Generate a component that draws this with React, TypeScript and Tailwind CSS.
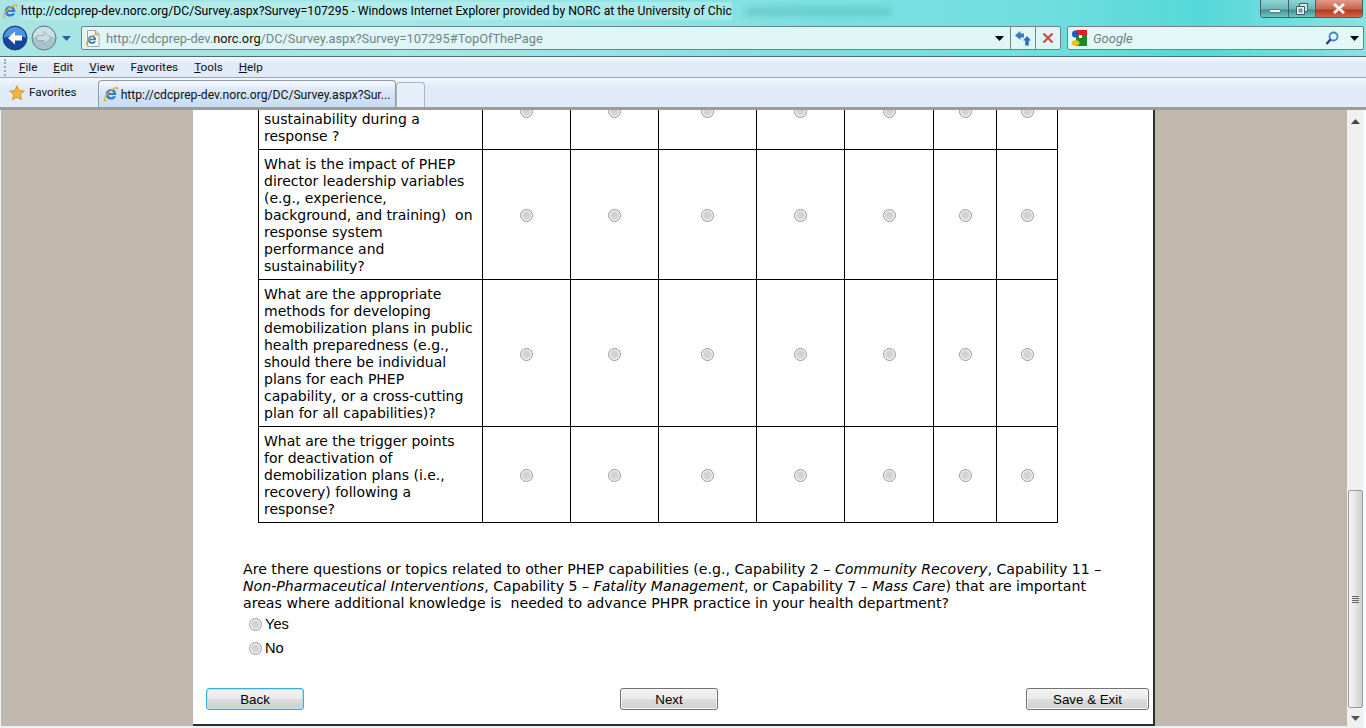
const rows = [
  {
    h: "h-[79px]",
    lines: "sustainability during a\nresponse ?",
    bottom: true,
  },
  {
    h: "h-[130px]",
    lines:
      "What is the impact of PHEP\ndirector leadership variables\n(e.g., experience,\nbackground, and training)\u00a0 on\nresponse system\nperformance and\nsustainability?",
  },
  {
    h: "h-[147px]",
    lines:
      "What are the appropriate\nmethods for developing\ndemobilization plans in public\nhealth preparedness (e.g.,\nshould there be individual\nplans for each PHEP\ncapability, or a cross-cutting\nplan for all capabilities)?",
  },
  {
    h: "h-[96px]",
    lines:
      "What are the trigger points\nfor deactivation of\ndemobilization plans (i.e.,\nrecovery) following a\nresponse?",
  },
];

const answerCols = ["w-[88px]", "w-[88px]", "w-[98px]", "w-[88px]", "w-[89px]", "w-[63px]", "w-[61px]"];

function Radio({ className = "" }: { className?: string }) {
  return (
    <span
      className={`h-[13px] w-[13px] rounded-full border border-[#9a9b9b] bg-[radial-gradient(circle_at_50%_45%,#cfcfcf_0%,#d6d6d6_45%,#f2f2f2_90%)] shadow-[inset_0_0_0_1px_#f4f4f4] ${className}`}
    />
  );
}

function IeIcon({ size = 16 }: { size?: number }) {
  return (
    <svg width={size} height={size} viewBox="0 0 16 16">
      <path
        d="M8.2 3C5.4 3 3 5.2 2.8 8.2 2.6 11.2 4.8 13.6 8 13.6c2.4 0 4.2-1.3 5-3.4h-3c-.4.7-1.1 1.1-2 1.1-1.3 0-2.3-.9-2.4-2.2h7.7c.3-3.4-1.9-6.1-5.1-6.1zM5.7 7.100C5.900 6 6.900 5.200 8.100 5.200S10.300 6 10.500 7.100z"
        fill="#2f7fd0"
      />
      <path
        d="M1 15C.2 13.600 1.800 9.400 5.600 5.700 9.600 1.800 13.400.2 14.700 1.200c1 .8.4 2.800-.6 4.400.2-1.300.3-2.700-.5-3.100C12.500 2 9.600 3.800 6.500 6.700 3.400 9.700 1.300 12.800 2.200 14c.5.600 1.700.4 3-.2C3.500 15.200 1.700 15.800 1 15z"
        fill="#f0a81c"
      />
    </svg>
  );
}

function BackIcon() {
  return (
    <svg width="26" height="26" viewBox="0 0 26 26">
      <circle cx="13" cy="13" r="12" fill="#11479f" stroke="#28436e" />
      <path d="M2 13a11 11 0 0 1 22 0c-5-3-17-3-22 0z" fill="#4f93e4" />
      <path d="M13 6.500 6 13l7 6.500v-4h7v-5h-7z" fill="#fff" />
    </svg>
  );
}

function ForwardIcon() {
  return (
    <svg width="26" height="26" viewBox="0 0 26 26">
      <circle cx="13" cy="13" r="12" fill="#a9c2cc" stroke="#5d7a88" />
      <path d="M2 13a11 11 0 0 1 22 0c-5-3-17-3-22 0z" fill="#cfe0e4" />
      <path d="M13 6.500 20 13l-7 6.500v-4H6v-5h7z" fill="#cddadf" stroke="#8ea9b5" strokeWidth=".8" />
    </svg>
  );
}

function Caret({ color = "#000", className = "" }: { color?: string; className?: string }) {
  return (
    <svg width="9" height="5" viewBox="0 0 9 5" className={className}>
      <path d="M0 0h9L4.500 5z" fill={color} />
    </svg>
  );
}

function PageIcon() {
  return (
    <svg width="16" height="17" viewBox="0 0 16 17">
      <path d="M2.500.5h8l3.500 3.500v12.500H2.500z" fill="#fbfcfd" stroke="#9aa5ae" />
      <path d="M10.500.5V4H14" fill="#dde4ea" stroke="#9aa5ae" />
      <g transform="translate(0.500 3) scale(.8)">
        <path
          d="M8.200 3C5.400 3 3 5.200 2.800 8.200 2.600 11.200 4.800 13.600 8 13.600c2.400 0 4.200-1.300 5-3.400h-3c-.4.700-1.100 1.100-2 1.100-1.300 0-2.300-.9-2.400-2.200h7.700c.3-3.400-1.900-6.100-5.100-6.100zM5.700 7.100C5.900 6 6.900 5.200 8.100 5.200S10.300 6 10.500 7.100z"
          fill="#2f7fd0"
        />
        <path
          d="M1 15C.2 13.600 1.800 9.400 5.600 5.700 9.600 1.800 13.400.2 14.700 1.200c1 .8.4 2.800-.6 4.400.2-1.300.3-2.700-.5-3.100C12.500 2 9.600 3.800 6.500 6.700 3.400 9.700 1.300 12.800 2.200 14c.5.600 1.700.4 3-.2C3.500 15.200 1.700 15.800 1 15z"
          fill="#f0a81c"
        />
      </g>
    </svg>
  );
}

function RefreshIcon() {
  return (
    <svg width="18" height="15" viewBox="0 0 18 15">
      <path d="M1 4.500 6.500 0v2.500h3.500v4H6.500V9z" fill="#3b76bf" />
      <path d="M17 9.500 13 5 9 9.500h2.200V14.500h3.600V9.500z" fill="#2f6db8" />
    </svg>
  );
}

function StopIcon() {
  return (
    <svg width="12" height="12" viewBox="0 0 12 12">
      <path d="M1.500 1.500 10.500 10.500M10.500 1.500 1.500 10.500" stroke="#c8504c" strokeWidth="2.400" />
    </svg>
  );
}

function GoogleIcon() {
  return (
    <svg width="16" height="16" viewBox="0 0 16 16">
      <rect x="5" y="0" width="11" height="8" fill="#e81c1c" />
      <rect x="5" y="5" width="11" height="11" fill="#1b8a2a" />
      <rect x="8" y="5" width="3" height="3" fill="#fff" />
      <ellipse cx="4" cy="4" rx="3" ry="3.500" fill="#1d58c4" />
      <ellipse cx="4.500" cy="13" rx="4" ry="2.800" fill="#f6bd1c" />
    </svg>
  );
}

function SearchIcon() {
  return (
    <svg width="14" height="15" viewBox="0 0 14 15">
      <circle cx="8.500" cy="5.500" r="4" fill="#eef8fb" stroke="#3c82cf" strokeWidth="1.800" />
      <path d="M5.500 8.500 1.500 13" stroke="#1e3f8f" strokeWidth="2.400" />
    </svg>
  );
}

function StarIcon() {
  return (
    <svg width="16" height="16" viewBox="0 0 16 16">
      <path
        d="M8 .8l2.200 4.700 5.100.6-3.800 3.500 1 5.100L8 12.200l-4.500 2.500 1-5.100L.7 6.100l5.100-.6z"
        fill="#f5b63b"
        stroke="#c98a1c"
        strokeWidth=".8"
      />
    </svg>
  );
}

function ActionButton({ label, className, focused }: { label: string; className: string; focused?: boolean }) {
  return (
    <button
      className={`${className} h-[22px] rounded-[3px] border bg-[linear-gradient(#f2f2f2_0%,#ebebeb_48%,#dddddd_52%,#cfcfcf_100%)] font-['Liberation_Sans',sans-serif] text-[13.33px] leading-[19px] text-black ${
        focused
          ? "border-[#3bacd8] shadow-[inset_0_0_0_1px_#b6e4f5]"
          : "border-[#707070] shadow-[inset_0_0_0_1px_#f7f7f7]"
      }`}
    >
      {label}
    </button>
  );
}

export default function App() {
  return (
    <div className="flex h-[728px] w-[1366px] flex-col overflow-hidden bg-[#c0b8ad] font-['DejaVu_Sans',sans-serif] text-black">
      {/* Window chrome */}
      <div className="relative h-[57px] shrink-0 border-b border-[#4d6a6c] bg-[linear-gradient(90deg,#a8e4e4_0%,#a5e6e6_30%,#92e4e4_46%,#7be0e0_60%,#72dfdf_75%,#56d8d8_88%,#86e3e3_100%)] font-['Roboto',sans-serif]">
        <div className="absolute left-[745px] top-[7px] h-[9px] w-[145px] bg-[#3f9a9c]/30 blur-[3px]" />

        {/* Title row */}
        <div className="flex h-[26px] items-start">
          <div className="ml-[2px] mt-[3px]">
            <IeIcon />
          </div>
          <span className="ml-[3px] mt-[2px] whitespace-nowrap bg-[#bdeeee]/60 text-[12.2px] leading-[18px]">
            http://cdcprep-dev.norc.org/DC/Survey.aspx?Survey=107295 - Windows Internet Explorer provided by NORC at the University of Chic
          </span>
          <div className="ml-auto mr-[3px] flex h-[18px] overflow-hidden rounded-b-[4px] border border-t-0 border-[#3f6467]">
            <div className="flex w-[28px] items-center justify-center border-r border-[#3f6467] bg-[linear-gradient(#8dd6d6_0%,#6fb9ba_50%,#3f9394_60%,#76c4c4_100%)]">
              <span className="mt-[4px] h-[4px] w-[12px] rounded-[1px] border border-[#5e7c7e] bg-white" />
            </div>
            <div className="flex w-[27px] items-center justify-center border-r border-[#3f6467] bg-[linear-gradient(#8dd6d6_0%,#6fb9ba_50%,#3f9394_60%,#76c4c4_100%)]">
              <svg width="12" height="12" viewBox="0 0 12 12">
                <path d="M3.500 .5h8v8h-8z" fill="#cfe8e8" stroke="#3f5f62" />
                <path d="M.5 3.500h8v8h-8z" fill="#e6f3f3" stroke="#3f5f62" />
                <path d="M3 6h3v3H3z" fill="#7fb5b7" stroke="#3f5f62" strokeWidth=".6" />
              </svg>
            </div>
            <div className="flex w-[46px] items-center justify-center bg-[linear-gradient(#e09a88_0%,#c9664f_50%,#b53a22_62%,#d4654a_100%)]">
              <svg width="14" height="11" viewBox="0 0 14 11">
                <path d="M2 1l10 9M12 1 2 10" stroke="#f4f0ee" strokeWidth="3" />
              </svg>
            </div>
          </div>
        </div>

        {/* Address row */}
        <div className="flex h-[24px] items-center">
          <div className="ml-[2px] mt-[-1px]">
            <BackIcon />
          </div>
          <div className="ml-[3px] mt-[-1px]">
            <ForwardIcon />
          </div>
          <Caret color="#2e5f9d" className="ml-[5px]" />
          <div className="ml-[10px] flex h-[24px] w-[980px] items-center rounded-[2px] border border-[#6d8486] bg-[#e0f6f6]">
            <div className="ml-[3px]">
              <PageIcon />
            </div>
            <span className="ml-[5px] mt-[2px] whitespace-nowrap text-[12.8px] text-[#6f8587]">
              http://cdcprep-dev.<span className="text-[#111]">norc.org</span>/DC/Survey.aspx?Survey=107295#TopOfThePage
            </span>
            <Caret className="ml-auto mr-[6px]" />
            <div className="flex h-full w-[25px] items-center justify-center border-l border-[#6d8486]">
              <RefreshIcon />
            </div>
            <div className="flex h-full w-[25px] items-center justify-center border-l border-[#6d8486]">
              <StopIcon />
            </div>
          </div>
          <div className="ml-[6px] flex h-[24px] w-[297px] items-center rounded-[2px] border border-[#6d8486] bg-[#e3f7f7]">
            <div className="ml-[3px]">
              <GoogleIcon />
            </div>
            <span className="ml-[6px] mt-[2px] text-[13px] italic text-[#707f80]">Google</span>
            <div className="ml-auto">
              <SearchIcon />
            </div>
            <Caret className="ml-[11px] mr-[4px]" />
          </div>
        </div>
      </div>

      {/* Menu bar */}
      <div className="flex h-[21px] shrink-0 items-center border-b border-[#9ba6ae] bg-[linear-gradient(#f2f7fd_0%,#e0ebf7_35%,#e0ebf7_100%)] font-['Roboto',sans-serif] text-[11.7px] text-[#111]">
        <div className="ml-[4px] h-[17px] w-[2px] border-l-2 border-dotted border-[#9aa5ae]" />
        <div className="ml-[13px] mt-[2px] flex gap-[16px]">
          <span><span className="underline">F</span>ile</span>
          <span><span className="underline">E</span>dit</span>
          <span><span className="underline">V</span>iew</span>
          <span>F<span className="underline">a</span>vorites</span>
          <span><span className="underline">T</span>ools</span>
          <span><span className="underline">H</span>elp</span>
        </div>
      </div>

      {/* Favorites and tabs */}
      <div className="flex h-[32px] shrink-0 border-b-[3px] border-[#9c9c9c] bg-[linear-gradient(#f2f7fd_0%,#e0ebf7_35%,#e0ebf7_100%)] font-['Roboto',sans-serif] text-[11.7px] text-[#111]">
        <div className="ml-[9px] flex items-center self-start pt-[6px]">
          <StarIcon />
          <span className="ml-[4px]">Favorites</span>
        </div>
        <div className="ml-[21px] mt-[2px] flex h-[27px] w-[298px] items-center rounded-t-[4px] border border-b-0 border-[#8f9ba5] bg-[linear-gradient(#f4f8fd_0%,#d5e5f7_45%,#c9ddf5_100%)]">
          <div className="ml-[4px]">
            <IeIcon />
          </div>
          <span className="ml-[2px] mt-[2px] whitespace-nowrap text-[12.17px]">http://cdcprep-dev.norc.org/DC/Survey.aspx?Sur...</span>
        </div>
        <div className="mt-[4px] h-[25px] w-[29px] rounded-t-[4px] border border-b-0 border-[#a9b4bd] bg-[#e6eff9]" />
      </div>

      {/* Page viewport */}
      <div className="flex min-h-0 flex-1">
        <div className="min-h-0 flex-1 overflow-hidden border-b-2 border-l border-[#eaf3f4]">
          <div className="ml-[192px] flow-root h-[616px] w-[962px] border-r-2 border-b-2 border-[#2e2e2e] bg-white">
            <div className="ml-[65px] mt-[-40px] w-[800px]">
              <table className="w-[800px] table-fixed border-collapse border border-black text-[14px] leading-[17px]">
                <colgroup>
                  <col className="w-[224px]" />
                  {answerCols.map((w, i) => (
                    <col key={i} className={w} />
                  ))}
                </colgroup>
                <tbody>
                  {rows.map((row) => (
                    <tr key={row.lines} className={row.h}>
                      <td
                        className={`whitespace-pre-line border border-black pl-[5px] ${
                          row.bottom ? "py-[4px] align-bottom" : "pt-[5px] pb-[3px] align-middle"
                        }`}
                      >
                        {row.lines}
                      </td>
                      {answerCols.map((w, i) => (
                        <td key={i} className="border border-black pt-[2px] align-middle">
                          <Radio className="mx-auto block" />
                        </td>
                      ))}
                    </tr>
                  ))}
                </tbody>
              </table>
            </div>

            <p className="ml-[50px] mt-[38px] w-[870px] text-[14.15px] leading-[17px]">
              Are there questions or topics related to other PHEP capabilities (e.g., Capability 2 – <i>Community Recovery</i>, Capability 11 – <i>Non-Pharmaceutical Interventions</i>, Capability 5 – <i>Fatality Management</i>, or Capability 7 – <i>Mass Care</i>) that are important areas where additional knowledge is&nbsp; needed to advance PHPR practice in your health department?
            </p>

            <div className="ml-[56px] mt-[4px] flex flex-col gap-[7px] font-['Liberation_Sans',sans-serif] text-[14.670px] leading-[17px]">
              <label className="flex items-center gap-[3px]">
                <Radio /> Yes
              </label>
              <label className="flex items-center gap-[3px]">
                <Radio /> No
              </label>
            </div>

            <div className="ml-[13px] mt-[31px] flex">
              <ActionButton label="Back" className="w-[98px]" focused />
              <ActionButton label="Next" className="ml-[316px] w-[98px]" />
              <ActionButton label="Save & Exit" className="ml-[308px] w-[123px]" />
            </div>
          </div>
        </div>

        {/* Scrollbar */}
        <div className="flex w-[19px] shrink-0 bg-[#f7fbfb]">
          <div className="flex w-[16px] flex-col items-center bg-[#f0f0f0]">
            <Caret color="#444" className="mt-[9px] rotate-180" />
            <div className="mt-[366px] flex h-[218px] w-[15px] items-center justify-center rounded-[2px] border border-[#9a9a9a] bg-[linear-gradient(90deg,#f5f5f5,#e6e6e6_45%,#cfcfcf)]">
              <div className="flex flex-col gap-[1px]">
                <span className="h-px w-[7px] bg-[#666]" />
                <span className="h-px w-[7px] bg-[#666]" />
                <span className="h-px w-[7px] bg-[#666]" />
                <span className="h-px w-[7px] bg-[#666]" />
              </div>
            </div>
            <Caret color="#555" className="mt-[8px]" />
          </div>
        </div>
      </div>
    </div>
  );
}
